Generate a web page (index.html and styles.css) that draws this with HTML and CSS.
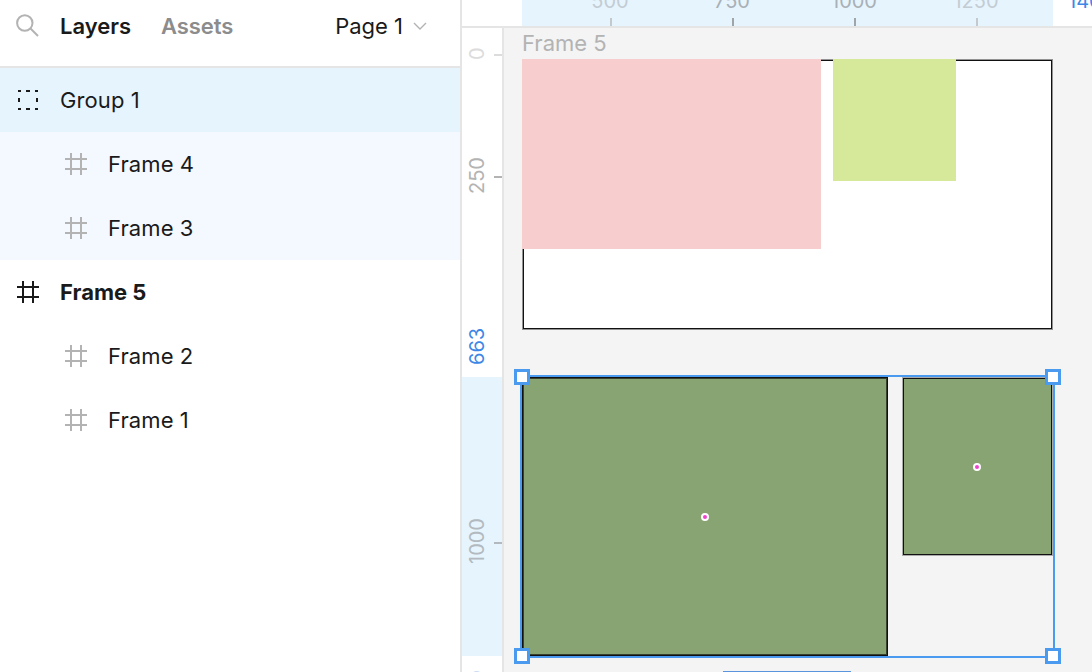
FILE: index.html
```html
<!DOCTYPE html>
<html lang="en">
<head>
<meta charset="utf-8">
<title>Layers</title>
<link rel="stylesheet" href="styles.css">
</head>
<body>
<div class="app">
  <aside class="sidebar">
    <header class="tabs">
      <svg class="search-icon" width="24" height="24" viewBox="0 0 24 24"><circle cx="8.8" cy="9" r="7.7" fill="none" stroke="#b3b3b3" stroke-width="2"/><path d="M14.5 14.5 L22 22" stroke="#b3b3b3" stroke-width="2" fill="none"/></svg>
      <span class="tab tab-active">Layers</span>
      <span class="tab tab-muted">Assets</span>
      <span class="page">Page 1</span>
      <svg class="chevron" width="14" height="8" viewBox="0 0 14 8"><path d="M1 1 L7 7 L13 1" fill="none" stroke="#b3b3b3" stroke-width="1.4"/></svg>
    </header>
    <ul class="layers">
      <li class="row row-selected">
        <svg class="icon icon-group" width="20" height="20" viewBox="0 0 20 20"><path d="M0 1h3M8 1h4M17 1h3M0 19h3M8 19h4M17 19h3M1 8v4M19 8v4" fill="none" stroke="#1a1a1a" stroke-width="2"/></svg>
        <span class="label">Group 1</span>
      </li>
      <li class="row row-child row-tint">
        <svg class="icon" width="22" height="22" viewBox="0 0 22 22"><path d="M0 6h22M0 16h22M6 0v22M16 0v22" fill="none" stroke="#b3b3b3" stroke-width="2"/></svg>
        <span class="label">Frame 4</span>
      </li>
      <li class="row row-child row-tint">
        <svg class="icon" width="22" height="22" viewBox="0 0 22 22"><path d="M0 6h22M0 16h22M6 0v22M16 0v22" fill="none" stroke="#b3b3b3" stroke-width="2"/></svg>
        <span class="label">Frame 3</span>
      </li>
      <li class="row">
        <svg class="icon" width="22" height="22" viewBox="0 0 22 22"><path d="M0 6h22M0 16h22M6 0v22M16 0v22" fill="none" stroke="#1a1a1a" stroke-width="2"/></svg>
        <span class="label label-bold">Frame 5</span>
      </li>
      <li class="row row-child">
        <svg class="icon" width="22" height="22" viewBox="0 0 22 22"><path d="M0 6h22M0 16h22M6 0v22M16 0v22" fill="none" stroke="#b3b3b3" stroke-width="2"/></svg>
        <span class="label">Frame 2</span>
      </li>
      <li class="row row-child">
        <svg class="icon" width="22" height="22" viewBox="0 0 22 22"><path d="M0 6h22M0 16h22M6 0v22M16 0v22" fill="none" stroke="#b3b3b3" stroke-width="2"/></svg>
        <span class="label">Frame 1</span>
      </li>
    </ul>
  </aside>
  <main class="workspace">
    <div class="ruler-top">
      <div class="rt-band"></div>
      <span class="rt-num rt-500">500</span><i class="rt-tick rt-t500"></i>
      <span class="rt-num rt-750">750</span><i class="rt-tick rt-t750"></i>
      <span class="rt-num rt-1000">1000</span><i class="rt-tick rt-t1000"></i>
      <span class="rt-num rt-1250">1250</span><i class="rt-tick rt-t1250"></i>
      <span class="rt-num rt-blue">1400</span>
    </div>
    <div class="lower">
      <div class="ruler-left">
        <div class="rl-band"></div>
        <span class="rl-num rl-0">0</span><i class="rl-tick rl-t0"></i>
        <span class="rl-num rl-250">250</span><i class="rl-tick rl-t250"></i>
        <span class="rl-num rl-663">663</span>
        <span class="rl-num rl-1000">1000</span><i class="rl-tick rl-t1000"></i>
        <span class="rl-num rl-last">1280</span>
      </div>
      <div class="canvas">
        <span class="frame-name">Frame 5</span>
        <div class="frame5"></div>
        <div class="pink"></div>
        <div class="lime"></div>
        <div class="olive olive-a"></div>
        <div class="olive olive-b"></div>
        <i class="pivot pivot-a"></i>
        <i class="pivot pivot-b"></i>
        <div class="selection"></div>
        <i class="handle h-tl"></i>
        <i class="handle h-tr"></i>
        <i class="handle h-bl"></i>
        <i class="handle h-br"></i>
        <div class="scrollbar"></div>
      </div>
    </div>
  </main>
</div>
</body>
</html>
```
FILE: styles.css
```css
* { box-sizing: border-box; }
html, body { margin: 0; padding: 0; height: 100%; overflow: hidden; background: #fff; }
body { font-family: Inter, "Liberation Sans", sans-serif; color: #1a1a1a; font-size: 22px; }
.app { display: flex; width: 1092px; height: 672px; }
.sidebar { width: 462px; flex: none; border-right: 2px solid #e5e5e5; background: #fff; }
.tabs { height: 68px; border-bottom: 2px solid #e5e5e5; display: flex; align-items: center; padding: 0 33px 14px 16px; }
.search-icon { flex: none; margin-right: 20px; }
.tab { font-weight: 600; font-size: 22px; line-height: 28px; }
.tab-active { color: #1a1a1a; margin-right: 30px; }
.tab-muted { color: #8c8c8c; letter-spacing: -0.1px; }
.page { margin-left: auto; font-size: 22px; line-height: 28px; margin-right: 10px; }
.chevron { flex: none; }
.layers { list-style: none; margin: 0; padding: 0; }
.row { height: 64px; display: flex; align-items: center; padding-left: 17px; }
.row-selected { background: #e6f4fe; }
.row-tint { background: #f4f9ff; }
.row-child { padding-left: 65px; }
.icon { flex: none; margin-right: 21px; }
.icon-group { margin-left: 1px; margin-right: 22px; }
.label { font-size: 22px; line-height: 28px; letter-spacing: 0.1px; }
.label-bold { font-weight: 700; letter-spacing: 0; }
.workspace { flex: 1; display: flex; flex-direction: column; min-width: 0; }
.ruler-top { position: relative; height: 28px; flex: none; border-bottom: 2px solid #e5e5e5; overflow: hidden; background: #fff; }
.rt-band { position: absolute; left: 60px; top: 0; width: 531px; height: 26px; background: #e6f4fe; }
.rt-num { position: absolute; top: -13px; font-size: 20px; line-height: 28px; transform: translateX(-50%); white-space: nowrap; }
.rt-500 { left: 148px; color: #c3ccd3; }
.rt-750 { left: 270px; color: #a9b0b5; }
.rt-1000 { left: 392px; color: #a9b0b5; }
.rt-1250 { left: 514px; color: #c3ccd3; }
.rt-blue { left: 606px; transform: none; color: #3d87e6; }
.rt-tick { position: absolute; top: 18px; width: 2px; height: 8px; }
.rt-t500 { left: 148px; background: #c3c9cd; }
.rt-t750 { left: 270px; background: #a0a5a9; }
.rt-t1000 { left: 392px; background: #a0a5a9; }
.rt-t1250 { left: 514px; background: #c3c9cd; }
.lower { flex: 1; display: flex; min-height: 0; }
.ruler-left { position: relative; width: 42px; flex: none; border-right: 2px solid #e5e5e5; background: #fff; overflow: hidden; }
.rl-band { position: absolute; left: 0; top: 349px; width: 40px; height: 279px; background: #e6f4fe; }
.rl-num { position: absolute; left: 1px; font-size: 20px; line-height: 28px; white-space: nowrap; transform-origin: 0 0; transform: rotate(-90deg); }
.rl-0 { top: 32px; color: #dcdcdc; }
.rl-250 { top: 166px; color: #b3b3b3; }
.rl-663 { top: 337px; color: #3d87e6; }
.rl-1000 { top: 536px; color: #b3babf; }
.rl-last { top: 688px; color: #3d87e6; }
.rl-tick { position: absolute; left: 32px; width: 8px; height: 2px; }
.rl-t0 { top: 26px; background: #dcdcdc; }
.rl-t250 { top: 148px; background: #b3b3b3; }
.rl-t1000 { top: 514px; background: #b3babf; }
.canvas { position: relative; flex: 1; background: #f4f4f4; overflow: hidden; }
.frame-name { position: absolute; left: 18px; top: 1px; font-size: 22px; line-height: 28px; color: #b3b3b3; }
.frame5 { position: absolute; left: 19px; top: 32px; width: 529px; height: 269px; background: #fff; border: 1px solid #111; box-shadow: 0 0 0 1px rgba(0, 0, 0, 0.4); }
.pink { position: absolute; left: 18px; top: 31px; width: 299px; height: 190px; background: #f7cdcd; }
.lime { position: absolute; left: 329px; top: 31px; width: 123px; height: 122px; background: #d6e899; }
.olive { position: absolute; background: #89a473; border: 1px solid #111; }
.olive-a { left: 18px; top: 349px; width: 366px; height: 279px; box-shadow: inset 0 0 0 1px rgba(0, 0, 0, 0.6); }
.olive-b { left: 399px; top: 350px; width: 149px; height: 177px; box-shadow: 0 0 0 1px rgba(0, 0, 0, 0.3); }
.pivot { position: absolute; width: 8px; height: 8px; border-radius: 50%; background: #ee44cc; border: 2.5px solid #fff; }
.pivot-a { left: 197px; top: 485px; }
.pivot-b { left: 469px; top: 435px; }
.selection { position: absolute; left: 16px; top: 347px; width: 535px; height: 283px; border: 2px solid #4a9bf0; }
.handle { position: absolute; width: 16px; height: 16px; background: #fff; border: 3px solid #4a9bf0; }
.h-tl { left: 10px; top: 341px; }
.h-tr { left: 541px; top: 341px; }
.h-bl { left: 10px; top: 620px; }
.h-br { left: 541px; top: 620px; }
.scrollbar { position: absolute; left: 219px; top: 643px; width: 128px; height: 1px; background: #5a94dc; }
```
